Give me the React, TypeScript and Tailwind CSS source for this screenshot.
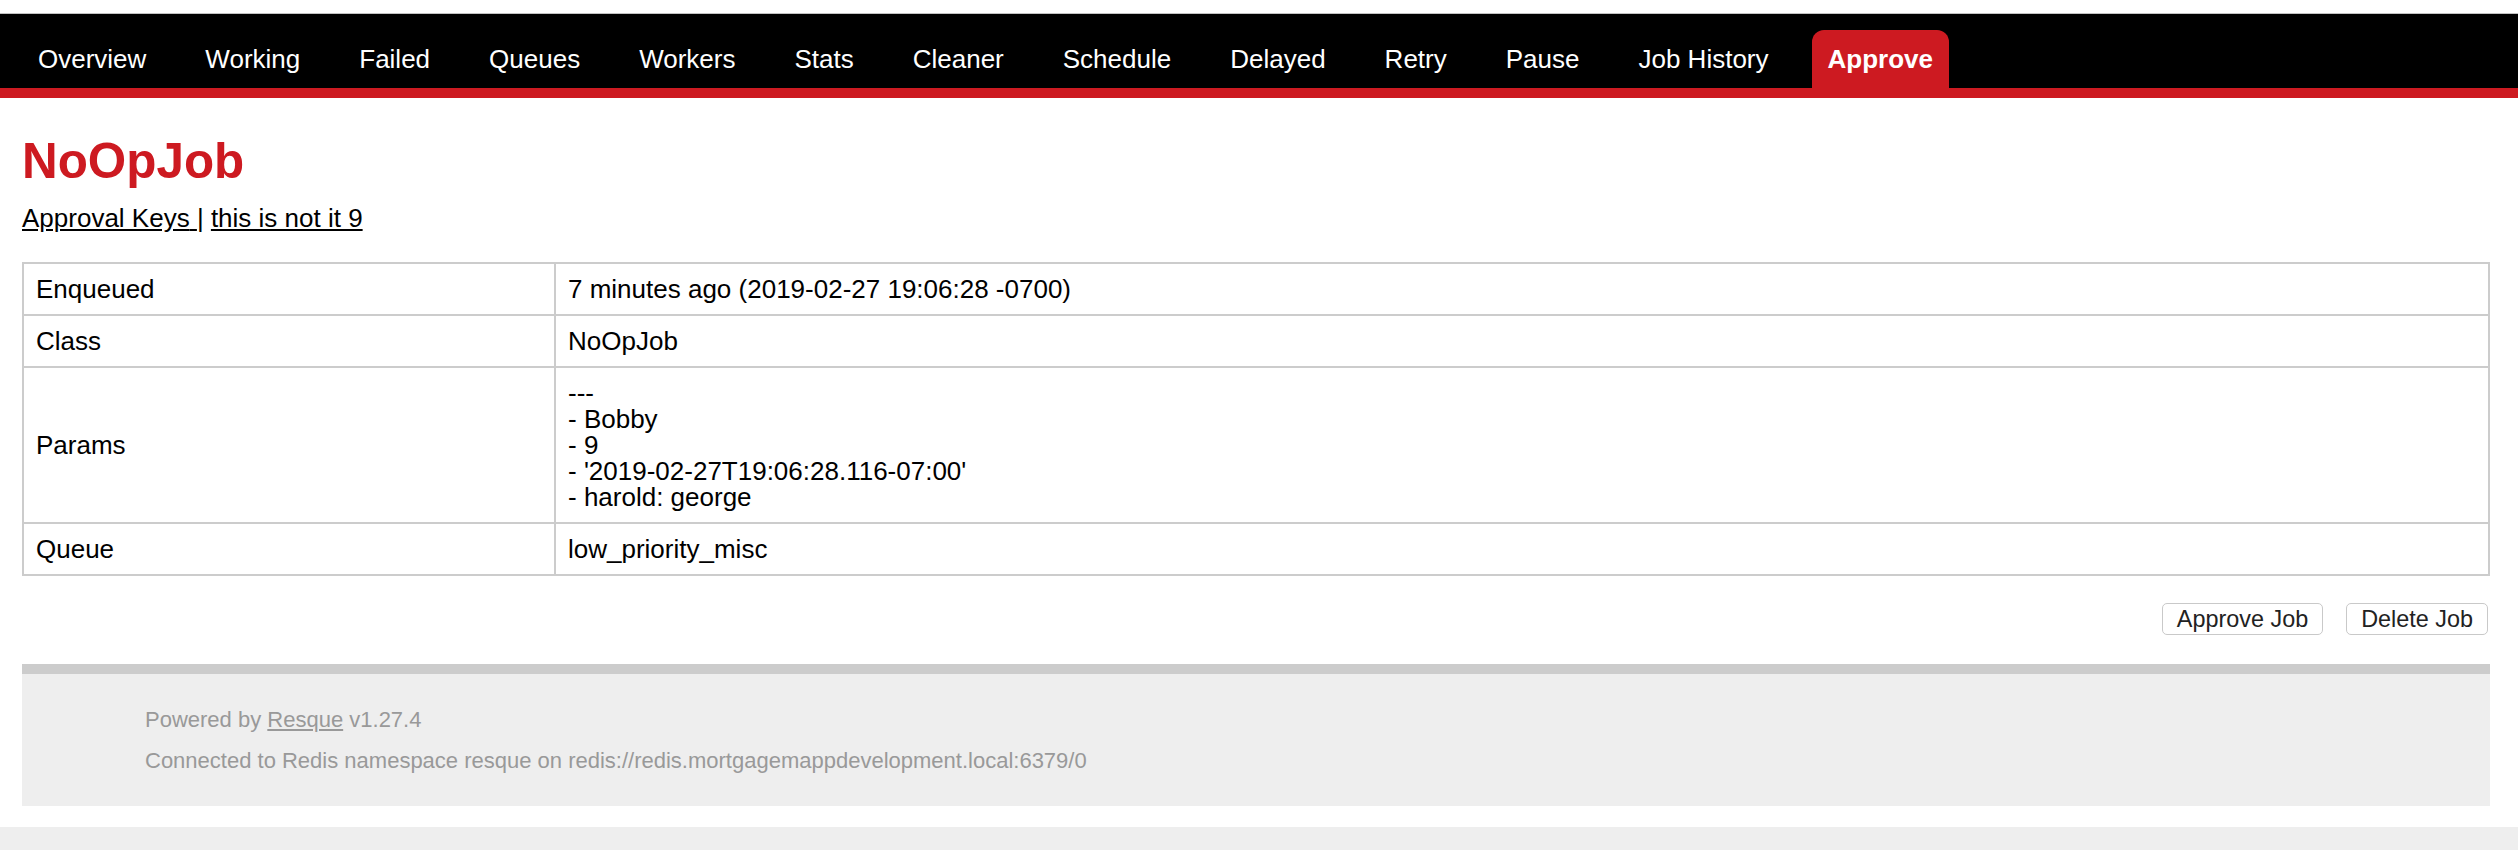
const tabs = [
  "Overview",
  "Working",
  "Failed",
  "Queues",
  "Workers",
  "Stats",
  "Cleaner",
  "Schedule",
  "Delayed",
  "Retry",
  "Pause",
  "Job History",
  "Approve",
];

const params = ["---", "- Bobby", "- 9", "- '2019-02-27T19:06:28.116-07:00'", "- harold: george"];

const rows: { label: string; value: React.ReactNode }[] = [
  { label: "Enqueued", value: "7 minutes ago (2019-02-27 19:06:28 -0700)" },
  { label: "Class", value: "NoOpJob" },
  {
    label: "Params",
    value: (
      <>
        {params.map((line) => (
          <div key={line}>{line}</div>
        ))}
      </>
    ),
  },
  { label: "Queue", value: "low_priority_misc" },
];

function Header() {
  return (
    <div className="mt-[13px] border-t border-[#c2c2c2] border-b-[10px] border-b-[#cd1a21] bg-black pl-[22px] pt-4">
      <ul className="flex">
        {tabs.map((tab) => {
          const current = tab === "Approve";
          return (
            <li key={tab} className="mr-[27px]">
              <a
                href="#"
                className={
                  current
                    ? "block rounded-t-[12px] bg-[#cd1a21] p-4 font-bold text-white"
                    : "block p-4 text-white"
                }
              >
                {tab}
              </a>
            </li>
          );
        })}
      </ul>
    </div>
  );
}

export default function App() {
  return (
    <div className="min-h-screen bg-white text-[26px] leading-[26px] text-black [font-family:'Liberation_Sans',Arial,sans-serif]">
      <Header />

      <div className="pl-[22px] pr-[28px] pt-[18px]">
        <h1 className="my-5 text-[49.4px] font-bold leading-none text-[#cd1a21]">NoOpJob</h1>
        <p>
          <a href="#" className="underline">
            Approval Keys{" "}
          </a>
          |{" "}
          <a href="#" className="underline">
            this is not it 9
          </a>
        </p>

        <table className="mb-5 mt-[31px] w-full table-fixed border-collapse">
          <colgroup>
            <col className="w-[532px]" />
            <col />
          </colgroup>
          <tbody>
            {rows.map((row) => (
              <tr key={row.label}>
                <td className="border-2 border-[#cccccc] p-3 align-middle">{row.label}</td>
                <td className="border-2 border-[#cccccc] p-3 align-middle">{row.value}</td>
              </tr>
            ))}
          </tbody>
        </table>

        <div className="mb-[29px] flex justify-end gap-[23px] pr-[2px] pt-[7px]">
          <button className="h-8 rounded-[5px] border border-[#c9c9c9] bg-white px-[14px] text-[23.4px] leading-none text-[#222]">
            Approve Job
          </button>
          <button className="h-8 rounded-[5px] border border-[#c9c9c9] bg-white px-[14px] text-[23.4px] leading-none text-[#222]">
            Delete Job
          </button>
        </div>

        <div className="flex flex-col gap-2 border-t-[10px] border-[#cccccc] bg-[#eeeeee] px-[123px] py-[29px] text-[22px] leading-[33px] text-[#999999]">
          <p>
            Powered by{" "}
            <a href="#" className="text-[#999999] underline">
              Resque
            </a>{" "}
            v1.27.4
          </p>
          <p>Connected to Redis namespace resque on redis://redis.mortgagemappdevelopment.local:6379/0</p>
        </div>
      </div>

      <div className="mt-[21px] h-[60px] bg-[#eeeeee]" />
    </div>
  );
}
